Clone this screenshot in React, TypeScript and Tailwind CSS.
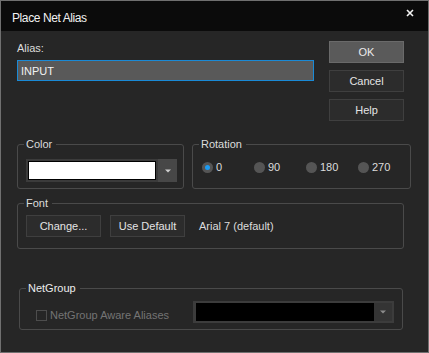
import React from "react";

function Radio({ label, checked }: { label: string; checked?: boolean }) {
  return (
    <div className="flex w-[52px] items-center gap-[3px]">
      <div className="flex h-[11px] w-[11px] items-center justify-center rounded-full bg-[#555555]">
        {checked && <div className="h-[5px] w-[5px] rounded-full bg-[#1c9bf2]" />}
      </div>
      <span>{label}</span>
    </div>
  );
}

function Btn({ children, primary }: { children: React.ReactNode; primary?: boolean }) {
  return (
    <div
      className={
        primary
          ? "flex h-[22px] w-[75px] items-center justify-center border border-[#6a6a6a] bg-[#5a5a5a] text-[#ececec]"
          : "flex h-[22px] w-[75px] items-center justify-center border border-[#3f3f3f] bg-[#2c2c2c] text-[#e4e4e4]"
      }
    >
      {children}
    </div>
  );
}

function Tri({ color }: { color: string }) {
  return (
    <svg width="6" height="4" viewBox="0 0 6 4">
      <path d="M0 0.5 H6 L3 3.5 Z" fill={color} />
    </svg>
  );
}

export default function App() {
  return (
    <div className="flex h-[353px] w-[429px] flex-col border border-[#707070] bg-[#262626] font-['Liberation_Sans',Arial,sans-serif] text-[11px] leading-[14px] text-[#dcdcdc]">
      {/* title bar */}
      <div className="flex h-[30px] shrink-0 items-start justify-between bg-[#0b0b0b] pl-[11px] pr-[14px]">
        <span className="mt-[10px] text-[12px] leading-[14px] tracking-[-0.4px] text-[#f2f2f2]">Place Net Alias</span>
        <svg className="mt-[8px]" width="8" height="8" viewBox="0 0 8 8">
          <path d="M1 1 L7 7 M7 1 L1 7" stroke="#f4f4f4" strokeWidth="1.6" />
        </svg>
      </div>

      {/* body */}
      <div className="flex flex-1 flex-col pl-[16px] pr-[24px]">
        {/* top row */}
        <div className="mt-[10px] flex items-start justify-between">
          <div className="flex flex-col">
            <span className="h-[14px]">Alias:</span>
            <div className="mt-[5px] flex h-[21px] w-[297px] items-center border border-[#1a8ad6] bg-[#595959] pl-[3px] text-[#f2f2f2]">
              INPUT
            </div>
          </div>
          <div className="flex flex-col gap-[7px]">
            <Btn primary>OK</Btn>
            <Btn>Cancel</Btn>
            <Btn>Help</Btn>
          </div>
        </div>

        {/* color / rotation */}
        <div className="mt-[16px] flex gap-[8px]">
          <fieldset className="w-[167px] rounded-[3px] border border-[#4a4a4a] pb-[6px] pl-[8px] pr-[6px] pt-[8px]">
            <legend className="ml-[-2px] pl-[2px] pr-[4px]">Color</legend>
            <div className="flex h-[23px] w-[151px] bg-[#3b3b3b]">
              <div className="flex flex-1 p-[2px]">
                <div className="flex-1 border border-black bg-white" />
              </div>
              <div className="flex w-[19px] items-center justify-center bg-[#474747]">
                <Tri color="#cfcfcf" />
              </div>
            </div>
          </fieldset>
          <fieldset className="flex-1 rounded-[3px] border border-[#4a4a4a] pl-[9px] pt-[9px]">
            <legend className="ml-[-3px] pl-[2px] pr-[4px]">Rotation</legend>
            <div className="flex">
              <Radio label="0" checked />
              <Radio label="90" />
              <Radio label="180" />
              <Radio label="270" />
            </div>
          </fieldset>
        </div>

        {/* font */}
        <fieldset className="mt-[7px] rounded-[3px] border border-[#4a4a4a] pb-[11px] pl-[8px] pt-[5px]">
          <legend className="ml-[-2px] pl-[2px] pr-[4px]">Font</legend>
          <div className="flex items-center">
            <Btn>Change...</Btn>
            <div className="ml-[9px]">
              <Btn>Use Default</Btn>
            </div>
            <span className="ml-[14px]">Arial 7 (default)</span>
          </div>
        </fieldset>

        {/* netgroup */}
        <fieldset className="ml-[2px] mr-[1px] mt-[32px] rounded-[3px] border border-[#4a4a4a] pb-[6px] pl-[16px] pr-[8px] pt-[6px]">
          <legend className="ml-[-10px] pl-[2px] pr-[4px] text-[#ececec]">NetGroup</legend>
          <div className="flex items-start">
            <div className="mt-[9px] h-[11px] w-[11px] border border-[#4d4d4d]" />
            <span className="ml-[3px] mt-[7px] text-[#747474]">NetGroup Aware Aliases</span>
            <div className="ml-auto flex h-[22px] w-[201px] bg-[#3c3c3c] py-[2px] pl-[3px] pr-[2px]">
              <div className="flex-1 bg-black" />
              <div className="flex w-[18px] items-center justify-center bg-[#343434]">
                <Tri color="#8c8c8c" />
              </div>
            </div>
          </div>
        </fieldset>
      </div>
    </div>
  );
}
